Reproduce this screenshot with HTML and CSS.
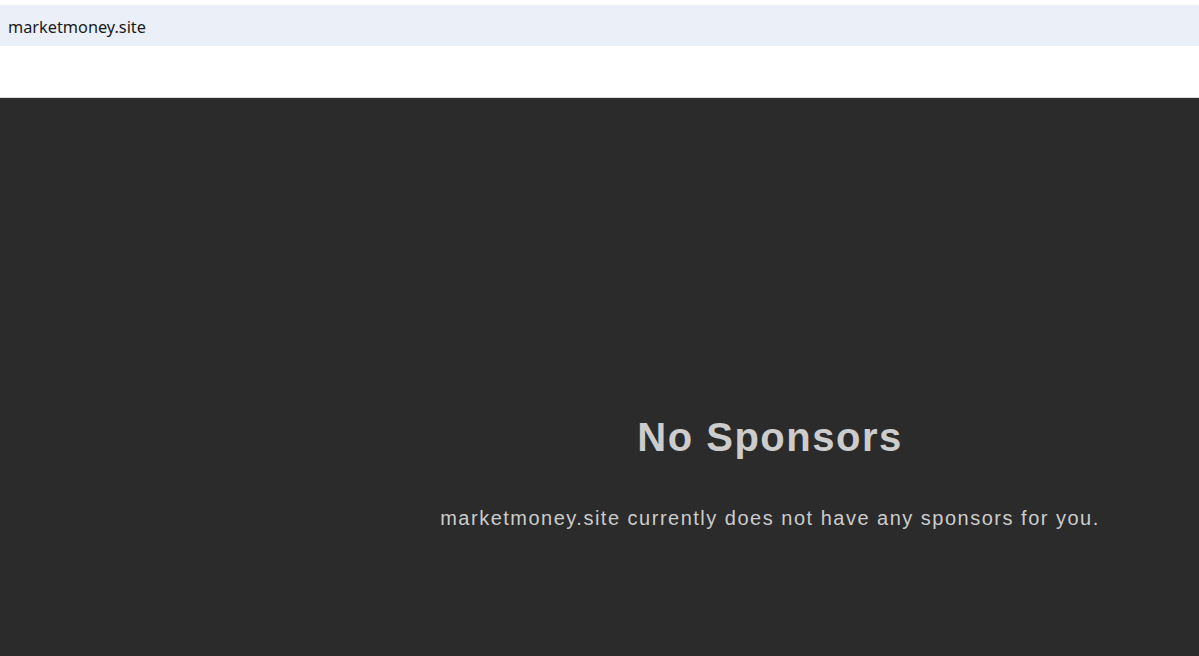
FILE: index.html
```html
<!DOCTYPE html>
<html lang="en">
<head>
    <meta charset="UTF-8">
    <meta name="viewport" content="width=device-width, initial-scale=1.0">
    <title>marketmoney.site</title>
    <link rel="stylesheet" href="styles.css">
</head>
<body>
    <!-- Thanh tên miền -->
    <div class="domain-bar">marketmoney.site</div>

    <div class="spacer"></div>

    <!-- Khung thông báo -->
    <div class="main">
        <div class="notice">
            <h1>No Sponsors</h1>
            <p>marketmoney.site currently does not have any sponsors for you.</p>
        </div>
    </div>
</body>
</html>
```

FILE: styles.css
```css
html, body {
    height: 100%;
}

body {
    margin: 0;
    padding-top: 5px;
    box-sizing: border-box;
    display: flex;
    flex-direction: column;
    background-color: #ffffff;
}

.domain-bar {
    height: 41px;
    line-height: 44px;
    padding-left: 8px;
    box-sizing: border-box;
    background-color: #ebf0f8;
    color: #1a1a1a;
    font-family: "Noto Sans", "Open Sans", sans-serif;
    font-size: 16.3px;
}

.spacer {
    height: 51px;
    border-bottom: 1px solid #dddddd;
}

.main {
    flex: 1;
    background-color: #2b2b2b;
    display: flex;
    justify-content: center;
    padding-left: 341px;
    padding-top: 316px;
}

.notice {
    text-align: center;
    font-family: "Liberation Sans", Arial, sans-serif;
    color: #cccccc;
}

.notice h1 {
    margin: 0;
    font-size: 40px;
    letter-spacing: 1.5px;
    font-weight: bold;
    line-height: 46px;
}

.notice p {
    margin: 46px 0 0;
    font-size: 20px;
    letter-spacing: 1.5px;
    line-height: 24px;
}
```
